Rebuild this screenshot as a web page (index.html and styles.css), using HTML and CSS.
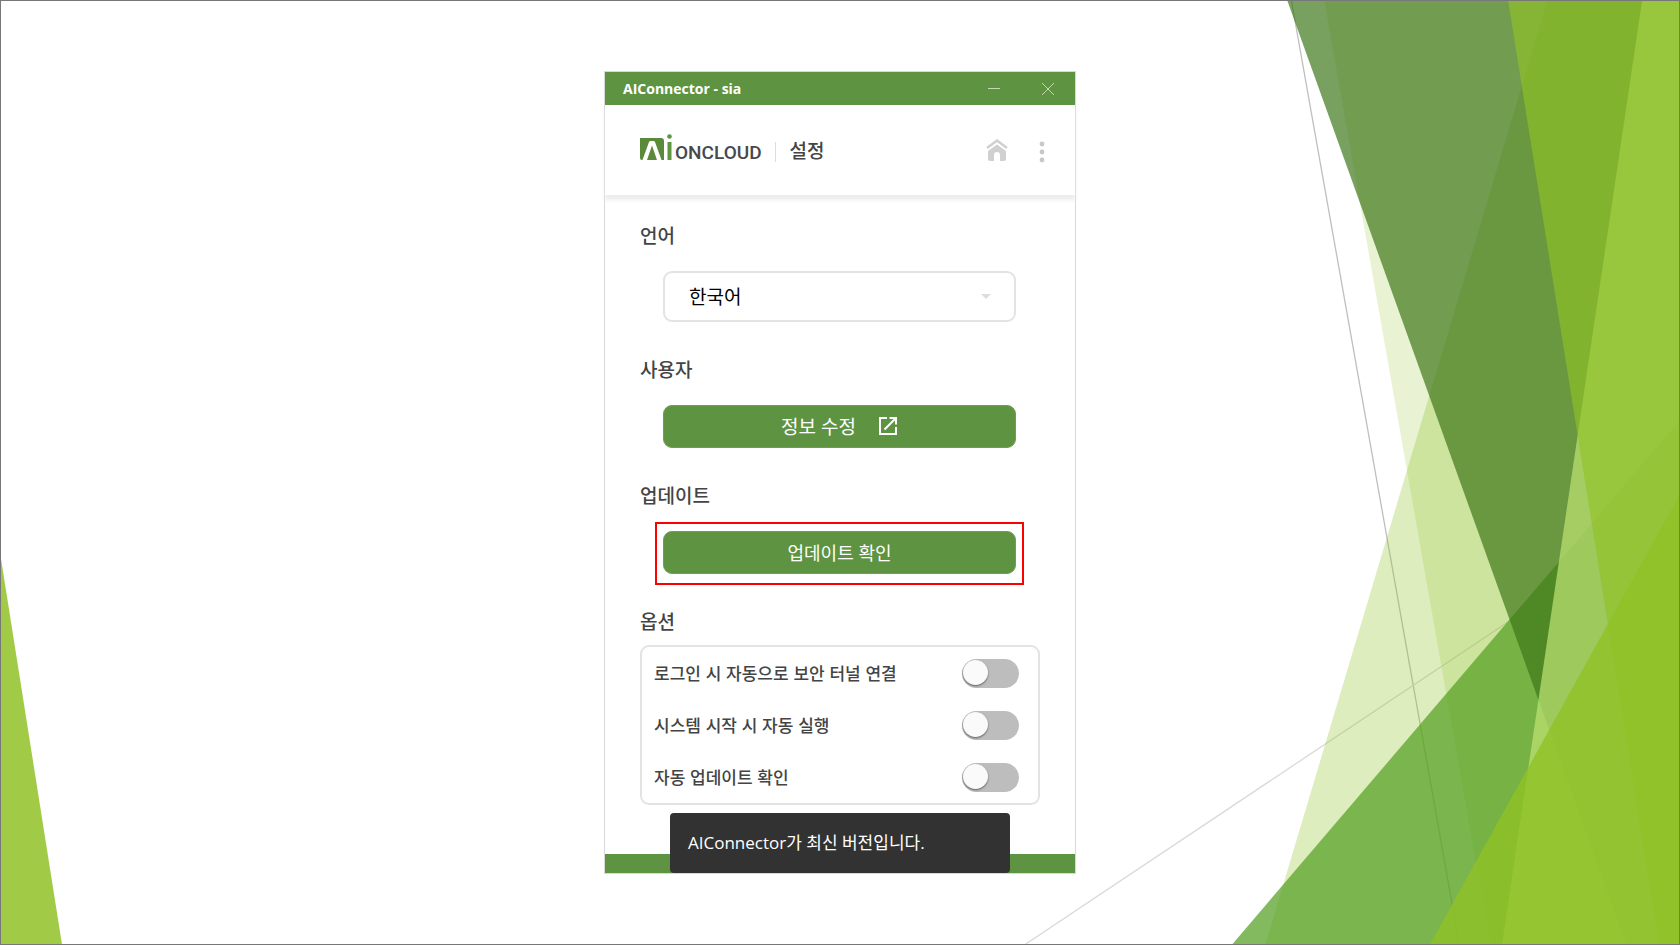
FILE: index.html
```html
<!DOCTYPE html>
<html lang="ko">
<head>
    <meta charset="UTF-8">
    <meta name="viewport" content="width=device-width, initial-scale=1.0">
    <title>AIConnector - 설정</title>
    <link rel="stylesheet" href="styles.css">
</head>
<body>
    <div class="slide">
        <svg class="facets" viewBox="0 0 1680 945" preserveAspectRatio="none" aria-hidden="true">
            <path d="M1292 0L1460 945" stroke="#bfbfbf" stroke-width="1.3"/>
            <path d="M1680 508L1026 945" stroke="#d9d9d9" stroke-width="1.3"/>
            <path d="M1548 0H1680V945H1266Z" fill="#90c226" fill-opacity=".3"/>
            <path d="M1325 0H1680V945H1491Z" fill="#90c226" fill-opacity=".2"/>
            <path d="M1680 421V945H1233Z" fill="#54a021" fill-opacity=".72"/>
            <path d="M1288 0H1680V945H1627Z" fill="#3f7819" fill-opacity=".7"/>
            <path d="M1643 0H1680V945H1503Z" fill="#c0e474" fill-opacity=".7"/>
            <path d="M1509 0H1680V945H1660Z" fill="#90c226" fill-opacity=".65"/>
            <path d="M1680 496V945H1431Z" fill="#90c226" fill-opacity=".8"/>
            <path d="M0 559L61 945H0Z" fill="#90c226" fill-opacity=".85"/>
        </svg>

        <main class="app">
            <div class="titlebar">
                <span class="titlebar-text">AIConnector - sia</span>
                <button type="button" class="win-button" aria-label="최소화">
                    <svg width="14" height="14" viewBox="0 0 14 14"><path d="M1 6.500H13"/></svg>
                </button>
                <button type="button" class="win-button" aria-label="닫기">
                    <svg width="14" height="14" viewBox="0 0 14 14"><path d="M1 1L13 13M13 1L1 13"/></svg>
                </button>
            </div>

            <header class="header">
                <div class="logo">
                    <svg width="33" height="27" viewBox="0 0 33 27" aria-hidden="true">
                        <path d="M0 4H21Q24 4 24 7V26H2Q0 26 0 24Z" fill="#5b8a3a"/>
                        <path d="M2.500 26L9 8Q9.500 7 10.500 7H13.500Q14.500 7 15 8L21.500 26H17L12 11.500L7 26Z" fill="#fff"/>
                        <path d="M27.500 8H31.500V26H27.500Z" fill="#5e9641"/>
                        <circle cx="29.500" cy="2.500" r="2.300" fill="#5e9641"/>
                    </svg>
                    <span class="logo-text">ONCLOUD</span>
                </div>
                <h1>설정</h1>
                <button type="button" class="icon-button home" aria-label="홈">
                    <svg width="22" height="22" viewBox="0 0 22 22">
                        <path d="M1 9L11 1.500L21 9" fill="none" stroke="#d0d0d0" stroke-width="2.500"/>
                        <path d="M2 12L11 5.500L20 12V20Q20 22 18 22H14V16Q14 13 11 13Q8 13 8 16V22H4Q2 22 2 20Z" fill="#d0d0d0"/>
                    </svg>
                </button>
                <button type="button" class="icon-button menu" aria-label="메뉴">
                    <svg width="6" height="22" viewBox="0 0 6 22" fill="#c8c8c8">
                        <circle cx="3" cy="3" r="2.400"/>
                        <circle cx="3" cy="11" r="2.400"/>
                        <circle cx="3" cy="19" r="2.400"/>
                    </svg>
                </button>
            </header>

            <div class="content">
                <section>
                    <h2><label for="language">언어</label></h2>
                    <div class="field">
                        <select id="language">
                            <option>한국어</option>
                        </select>
                        <svg class="arrow" width="10" height="5" viewBox="0 0 10 5"><path d="M0 0H10L5 5Z" fill="#dcdcdc"/></svg>
                    </div>
                </section>

                <section>
                    <h2>사용자</h2>
                    <div class="field">
                        <button type="button" class="btn btn-edit">
                            정보 수정
                            <svg width="20" height="20" viewBox="0 0 20 20" fill="none" stroke="#fff" stroke-width="2">
                                <path d="M9 2H2V18H18V11M11.500 2H18V8.500M18 2L6.500 13.500"/>
                            </svg>
                        </button>
                    </div>
                </section>

                <section>
                    <h2>업데이트</h2>
                    <div class="field highlight">
                        <button type="button" class="btn">업데이트 확인</button>
                    </div>
                </section>

                <section>
                    <h2>옵션</h2>
                    <div class="options">
                        <div class="option">
                            <label for="auto-tunnel">로그인 시 자동으로 보안 터널 연결</label>
                            <input type="checkbox" id="auto-tunnel" class="toggle">
                        </div>
                        <div class="option">
                            <label for="auto-start">시스템 시작 시 자동 실행</label>
                            <input type="checkbox" id="auto-start" class="toggle">
                        </div>
                        <div class="option">
                            <label for="auto-update">자동 업데이트 확인</label>
                            <input type="checkbox" id="auto-update" class="toggle">
                        </div>
                    </div>
                </section>
            </div>

            <div class="bottom-bar"></div>
            <div class="toast" role="status">AIConnector가 최신 버전입니다.</div>
        </main>
    </div>
</body>
</html>
```

FILE: styles.css
```css
* {
    box-sizing: border-box;
}
body {
    margin: 0;
    font-family: "Open Sans", "Noto Sans CJK KR", sans-serif;
    color: #444;
}
button, select {
    font-family: inherit;
}
h1, h2 {
    margin: 0;
    font-family: "Noto Sans CJK KR", sans-serif;
    font-size: 19px;
    font-weight: 500;
    line-height: 24px;
}
.slide {
    position: relative;
    display: flex;
    align-items: center;
    justify-content: center;
    min-height: 100vh;
    padding: 20px;
    border: 1px solid #777;
    background-color: white;
}
/* background shapes */
.facets {
    position: absolute;
    inset: 0;
    width: 100%;
    height: 100%;
}
.app {
    position: relative;
    width: 100%;
    max-width: 472px;
    border: 1px solid #d8d8d8;
    background-color: white;
}

.titlebar {
    display: flex;
    align-items: center;
    gap: 40px;
    height: 33px;
    padding: 0 20px 0 18px;
    background-color: #5e9441;
}
.titlebar-text {
    flex: 1;
    color: white;
    font-size: 14px;
    font-weight: bold;
}
.win-button, .icon-button {
    display: flex;
    padding: 0;
    border: none;
    background: none;
    cursor: pointer;
}
.win-button svg {
    stroke: #c3dbb5;
}

.header {
    display: flex;
    align-items: center;
    height: 90px;
    padding: 0 30px 0 35px;
    box-shadow: 0 5px 4px #ececec;
}
.logo {
    display: flex;
    align-items: flex-end;
    gap: 2px;
    margin-bottom: 6px;
}
.logo-text {
    color: #46494c;
    font-family: Roboto, sans-serif;
    font-size: 19px;
    font-weight: 500;
    line-height: 16px;
}
.header h1 {
    flex: 1;
    margin-left: 13px;
    padding-left: 15px;
    background: linear-gradient(#ddd, #ddd) left bottom / 1px 20px no-repeat;
}
.home {
    margin-right: 31px;
}
.menu {
    margin-top: 4px;
}

.content {
    display: flex;
    flex-direction: column;
    gap: 35px;
    padding: 28px 35px 49px;
}
.field {
    position: relative;
    margin: 24px 24px 0 23px;
}
select {
    display: block;
    width: 100%;
    height: 51px;
    padding: 0 24px;
    border: 2px solid #e3e3e3;
    border-radius: 9px;
    background-color: white;
    color: black;
    font-size: 19px;
    appearance: none;
}
.arrow {
    position: absolute;
    top: 23px;
    right: 25px;
    pointer-events: none;
}
.btn {
    display: flex;
    align-items: center;
    justify-content: center;
    gap: 22px;
    width: 100%;
    height: 43px;
    padding: 0 0 2px;
    border: 1px solid #6ba04f;
    border-radius: 9px;
    background-color: #5e9441;
    color: white;
    font-size: 18px;
    cursor: pointer;
}
.btn-edit {
    font-size: 19px;
}
.highlight::after {
    content: "";
    position: absolute;
    inset: -9px -8px -11px;
    border: 2px solid red;
    pointer-events: none;
}
.options {
    display: flex;
    flex-direction: column;
    margin-top: 12px;
    border: 2px solid #e3e3e3;
    border-radius: 9px;
}
.option {
    display: flex;
    align-items: center;
    justify-content: space-between;
    height: 52px;
    padding: 0 19px 0 12px;
}
.option label {
    font-family: "Noto Sans CJK KR", sans-serif;
    font-size: 17px;
    font-weight: 500;
    line-height: 24px;
}
.toggle {
    position: relative;
    width: 57px;
    height: 29px;
    margin: 0;
    border-radius: 15px;
    background-color: #bdbdbd;
    appearance: none;
    cursor: pointer;
}
.toggle::before {
    content: "";
    position: absolute;
    top: 1px;
    left: 1px;
    width: 25px;
    height: 25px;
    border-radius: 50%;
    background-color: #fafafa;
    box-shadow: 0 1px 2px rgba(0, 0, 0, 0.5);
}
.toggle:checked {
    background-color: #5e9441;
}
.toggle:checked::before {
    left: 31px;
}

.bottom-bar {
    height: 19px;
    background-color: #5e9441;
}
.toast {
    position: absolute;
    right: 65px;
    bottom: 0;
    left: 65px;
    height: 60px;
    padding-left: 18px;
    border-radius: 4px;
    background-color: #323232;
    color: white;
    font-size: 17px;
    line-height: 60px;
}
```
